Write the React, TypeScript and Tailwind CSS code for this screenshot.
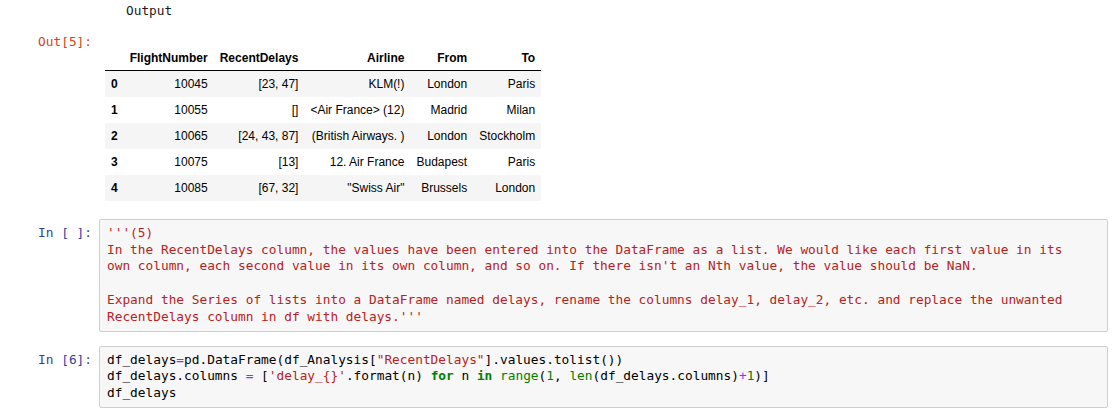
const mono = "font-['DejaVu_Sans_Mono','Liberation_Mono',monospace] text-[12.8px]";

const rows = [
  ['0', '10045', '[23, 47]', 'KLM(!)', 'London', 'Paris'],
  ['1', '10055', '[]', '<Air France> (12)', 'Madrid', 'Milan'],
  ['2', '10065', '[24, 43, 87]', '(British Airways. )', 'London', 'Stockholm'],
  ['3', '10075', '[13]', '12. Air France', 'Budapest', 'Paris'],
  ['4', '10085', '[67, 32]', '"Swiss Air"', 'Brussels', 'London'],
];

const headers = ['', 'FlightNumber', 'RecentDelays', 'Airline', 'From', 'To'];

function Prompt({ label, color }: { label: string; color: string }) {
  return (
    <div className={`w-[99px] shrink-0 pr-[7px] text-right whitespace-pre leading-[16.8px] ${color} ${mono}`}>
      {label}
    </div>
  );
}

function DataTable() {
  return (
    <table className="border-collapse text-[12px] text-black font-['Liberation_Sans',Arial,sans-serif]">
      <thead className="border-b border-black">
        <tr>
          {headers.map((h, i) => (
            <th key={i} className="h-[26px] px-[6px] py-0 text-right align-middle font-bold leading-[14px]">
              {h}
            </th>
          ))}
        </tr>
      </thead>
      <tbody>
        {rows.map((r, i) => (
          <tr key={i} className={i % 2 === 0 ? 'bg-[#f5f5f5]' : 'bg-white'}>
            {r.map((c, j) =>
              j === 0 ? (
                <th key={j} className="h-[26px] px-[6px] py-0 text-right align-middle font-bold leading-[14px]">
                  {c}
                </th>
              ) : (
                <td key={j} className="h-[26px] px-[6px] py-0 text-right align-middle whitespace-nowrap leading-[14px]">
                  {c}
                </td>
              )
            )}
          </tr>
        ))}
      </tbody>
    </table>
  );
}

function InputBox({ children }: { children: React.ReactNode }) {
  return (
    <div
      className={`flex-1 mr-[7px] border border-[#cfcfcf] rounded-[2px] bg-[#f7f7f7] px-[7px] py-[5px] leading-[16.8px] whitespace-pre text-black ${mono}`}
    >
      {children}
    </div>
  );
}

const Op = ({ c }: { c: string }) => <span className="text-[#aa22ff]">{c}</span>;
const Str = ({ c }: { c: string }) => <span className="text-[#ba2121]">{c}</span>;
const Kw = ({ c }: { c: string }) => <span className="text-[#008000] font-bold">{c}</span>;
const Bi = ({ c }: { c: string }) => <span className="text-[#008000]">{c}</span>;

export default function App() {
  return (
    <div className="w-[1115px] h-[415px] bg-white overflow-hidden pt-[3px]">
      {/* printed output */}
      <div className="flex">
        <div className="w-[126px] shrink-0" />
        <div className={`leading-[16.8px] text-[#1a1a1a] ${mono}`}>Output</div>
      </div>

      {/* Out[5] */}
      <div className="flex mt-[14px]">
        <Prompt label="Out[5]:" color="text-[#d84315]" />
        <div className="pl-[6px] pt-[11px]">
          <DataTable />
        </div>
      </div>

      {/* string cell */}
      <div className="flex mt-[18px]">
        <div className="pt-[6px]">
          <Prompt label="In [ ]:" color="text-[#303f9f]" />
        </div>
        <InputBox>
          <span className="text-[#ba2121]">
            {`'''(5)
In the RecentDelays column, the values have been entered into the DataFrame as a list. We would like each first value in its
own column, each second value in its own column, and so on. If there isn't an Nth value, the value should be NaN.

Expand the Series of lists into a DataFrame named delays, rename the columns delay_1, delay_2, etc. and replace the unwanted
RecentDelays column in df with delays.'''`}
          </span>
        </InputBox>
      </div>

      {/* code cell */}
      <div className="flex mt-[14px]">
        <div className="pt-[6px]">
          <Prompt label="In [6]:" color="text-[#303f9f]" />
        </div>
        <InputBox>
          <div>
            df_delays<Op c="=" />pd.DataFrame(df_Analysis[<Str c={'"RecentDelays"'} />].values.tolist())
          </div>
          <div>
            df_delays.columns <Op c="=" /> [<Str c="'delay_{}'" />.format(n) <Kw c="for" /> n <Kw c="in" />{' '}
            <Bi c="range" />(<Bi c="1" />, <Bi c="len" />(df_delays.columns)<Op c="+" />
            <Bi c="1" />)]
          </div>
          <div>df_delays</div>
        </InputBox>
      </div>
    </div>
  );
}
